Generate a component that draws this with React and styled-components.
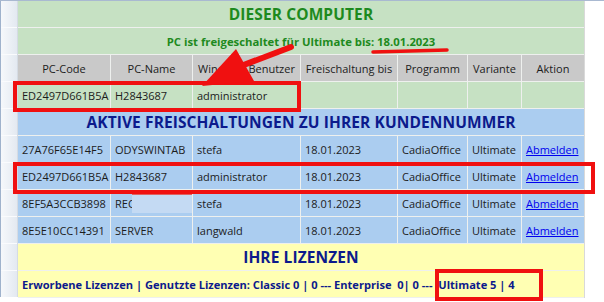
import React from "react";
import styled, { createGlobalStyle } from "styled-components";

const GlobalStyle = createGlobalStyle`
  html, body {
    margin: 0;
    padding: 0;
    background: #ffffff;
  }
  body {
    font-family: "Open Sans", "Noto Sans", "Liberation Sans", sans-serif;
  }
`;

const columns = [92, 81, 107, 96, 69, 53, 62];
const headers = ["PC-Code", "PC-Name", "Windows-Benutzer", "Freischaltung bis", "Programm", "Variante", "Aktion"];

const activeRows = [
  ["27A76F65E14F5", "ODYSWINTAB", "stefa"],
  ["ED2497D661B5A", "H2843687", "administrator"],
  ["8EF5A3CCB3898", "REC", "stefa"],
  ["8E5E10CC14391", "SERVER", "langwald"],
];

function App() {
  return (
    <>
      <GlobalStyle />
      <Page>
        <RowHeaders>
          {Array.from({ length: 11 }).map((_, i) => (
            <RowHeader key={i} />
          ))}
        </RowHeaders>
        <Grid>
          <Title $tone="green">DIESER COMPUTER</Title>
          <Subtitle>PC ist freigeschaltet für Ultimate bis: 18.01.2023</Subtitle>
          {headers.map((h) => (
            <HeadCell key={h}>{h}</HeadCell>
          ))}
          <Cell $bg="green">ED2497D661B5A</Cell>
          <Cell $bg="green">H2843687</Cell>
          <Cell $bg="green">administrator</Cell>
          <Cell $bg="green" />
          <Cell $bg="green" />
          <Cell $bg="green" />
          <Cell $bg="green" />

          <Title $tone="blue">AKTIVE FREISCHALTUNGEN ZU IHRER KUNDENNUMMER</Title>
          {activeRows.map((r) => (
            <React.Fragment key={r[0]}>
              <Cell $bg="blue">{r[0]}</Cell>
              <Cell $bg="blue">
                {r[1]}
                {r[1] === "REC" && <Redacted />}
              </Cell>
              <Cell $bg="blue">{r[2]}</Cell>
              <Cell $bg="blue">18.01.2023</Cell>
              <Cell $bg="blue">CadiaOffice</Cell>
              <Cell $bg="blue">Ultimate</Cell>
              <Cell $bg="blue">
                <Link href="#">Abmelden</Link>
              </Cell>
            </React.Fragment>
          ))}

          <Title $tone="yellow">IHRE LIZENZEN</Title>
          <Licenses>
            Erworbene Lizenzen | Genutzte Lizenzen: Classic 0 | 0 --- Enterprise&nbsp; 0| 0 ---&nbsp; Ultimate 5 | 4
          </Licenses>
        </Grid>
        <Markup width="604" height="302" viewBox="0 0 604 302">
          <g fill="none" stroke="#f01010" strokeWidth="4">
            <rect x="15" y="82" width="284" height="27" />
            <rect x="15" y="163" width="578" height="28" />
            <rect x="437" y="270" width="104" height="28" />
          </g>
          <path d="M373 51 L447 49" stroke="#f01010" strokeWidth="3.5" strokeLinecap="round" />
          <path d="M291 46 L228 70" stroke="#f01010" strokeWidth="6" strokeLinecap="round" />
          <path d="M202 85 L236 48 L254 80 Z" fill="#f01010" />
        </Markup>
      </Page>
    </>
  );
}

const Page = styled.div`
  position: relative;
  width: 604px;
  height: 302px;
  display: flex;
  align-items: flex-start;
  border-top: 1px solid #a9b9d1;
  box-sizing: border-box;
  overflow: hidden;
`;

const RowHeaders = styled.div`
  width: 16px;
  flex: none;
  display: flex;
  flex-direction: column;
  gap: 1px;
  border-left: 1px solid #9fb2cc;
  border-right: 1px solid #d5dbe3;
  background: #fafbfd;
`;

const RowHeader = styled.div`
  height: 26px;
  background: linear-gradient(to right, #f6f8fb, #e3e9f1);
`;

const Grid = styled.div`
  display: grid;
  grid-template-columns: ${columns.map((c) => `${c}px`).join(" ")};
  grid-auto-rows: 26px;
  gap: 1px;
  background: #eef0ee;
  border-right: 1px solid #d9d9d9;
  padding-bottom: 1px;
  font-size: 11px;
  color: #1c1c1c;
`;

const backgrounds = {
  green: "#c6e1c3",
  blue: "#abcdf0",
  yellow: "#ffffb3",
  gray: "#c9c9c9",
};

const titleColors = {
  green: "#1e8a1e",
  blue: "#0c1a8c",
  yellow: "#0c1a8c",
};

const Title = styled.div`
  grid-column: 1 / -1;
  display: flex;
  align-items: center;
  justify-content: center;
  background: ${(p) => backgrounds[p.$tone]};
  color: ${(p) => titleColors[p.$tone]};
  font-weight: 700;
  font-size: 15.5px;
  letter-spacing: 0.1px;
`;

const Subtitle = styled.div`
  grid-column: 1 / -1;
  display: flex;
  align-items: center;
  justify-content: center;
  background: ${backgrounds.green};
  color: #1e8a1e;
  font-weight: 700;
  font-size: 11.3px;
`;

const HeadCell = styled.div`
  display: flex;
  align-items: center;
  justify-content: center;
  background: ${backgrounds.gray};
  white-space: nowrap;
  overflow: hidden;
`;

const Cell = styled.div`
  position: relative;
  display: flex;
  align-items: center;
  padding-left: 4px;
  background: ${(p) => backgrounds[p.$bg]};
  white-space: nowrap;
  overflow: hidden;
`;

const Redacted = styled.span`
  position: absolute;
  left: 21px;
  top: 4px;
  width: 60px;
  height: 18px;
  background: #c4daf3;
  border-top: 1px solid #e06060;
`;

const Link = styled.a`
  color: #0000ee;
  text-decoration: underline;
`;

const Licenses = styled.div`
  grid-column: 1 / -1;
  display: flex;
  align-items: center;
  padding-left: 4px;
  background: ${backgrounds.yellow};
  color: #0c1a8c;
  font-weight: 700;
  font-size: 11.1px;
  white-space: pre;
`;

const Markup = styled.svg`
  position: absolute;
  left: 0;
  top: 0;
  pointer-events: none;
`;

export default App;
